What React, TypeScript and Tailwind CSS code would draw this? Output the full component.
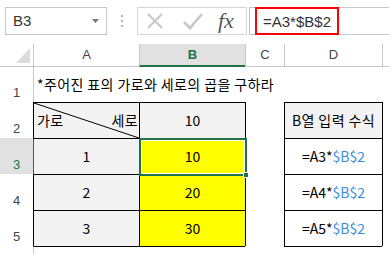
import type { ReactNode } from 'react';

const KR = "font-['Noto_Sans_CJK_KR',sans-serif] text-[14px] text-black";
const UI = "font-['Liberation_Sans',sans-serif]";

/** Row number on the left edge; Excel sits it near the bottom of the row. */
function RowHead({ n, active }: { n?: number; active?: boolean }) {
  return (
    <div
      className={`flex w-[33px] flex-none items-end justify-center pb-[3px] text-[13px] leading-none ${UI} ${
        active ? 'bg-[#e1e1e1] text-[#217346]' : 'text-[#444]'
      }`}
    >
      {n}
    </div>
  );
}

function Formula({ row }: { row: number }) {
  return (
    <span>
      =A{row}*<span className="text-[#3a8ee0]">$B$2</span>
    </span>
  );
}

interface DataRowProps {
  n: number;
  a: string;
  b: string;
  d: ReactNode;
  active?: boolean;
}

function DataRow({ n, a, b, d, active }: DataRowProps) {
  return (
    <div className={`flex h-[36px] ${KR}`}>
      <RowHead n={n} active={active} />
      <div
        className={`flex w-[106px] flex-none items-center justify-center border-l border-t border-t-black bg-[#f2f2f2] ${
          active ? 'border-l-[#217346]' : 'border-l-black'
        }`}
      >
        {a}
      </div>
      <div className="relative flex w-[106px] flex-none items-center justify-center border-l border-t border-black bg-[#ffff00]">
        {b}
        {active ? (
          <div className="absolute -left-[1px] -top-[1px] z-10 h-[38px] w-[108px] border-2 border-[#217346]">
            <div className="h-full w-full border border-white" />
            <div className="absolute -bottom-[4px] -right-[4px] h-[6px] w-[6px] border border-white bg-[#217346]" />
          </div>
        ) : null}
      </div>
      <div className="w-[39px] flex-none border-l border-black" />
      <div className="flex w-[98px] flex-none items-center justify-center border-l border-t border-black">
        {d}
      </div>
      <div className="flex-1 border-l border-black" />
    </div>
  );
}

export default function App() {
  return (
    <div className="h-[254px] w-[389px] overflow-hidden bg-white">
      {/* name box + formula bar */}
      <div className="flex h-[44px] items-start pt-[7px]">
        <div className={`ml-[5px] flex h-[28px] w-[102px] flex-none items-center justify-between border border-[#c6c6c6] pl-[7px] pr-[7px] text-[15px] text-[#333] ${UI}`}>
          <span>B3</span>
          <svg width="7" height="4" viewBox="0 0 7 4">
            <path d="M0 0h7L3.5 4z" fill="#777" />
          </svg>
        </div>
        <div className="flex h-[28px] w-[30px] flex-none flex-col items-center justify-center gap-[3px]">
          <span className="h-[2px] w-[2px] bg-[#b4b4b4]" />
          <span className="h-[2px] w-[2px] bg-[#b4b4b4]" />
          <span className="h-[2px] w-[2px] bg-[#b4b4b4]" />
        </div>
        <div className="flex h-[28px] w-[110px] flex-none items-center border border-[#d4d4d4] pl-[7px]">
          <svg width="20" height="16" viewBox="0 0 20 16" className="flex-none">
            <path d="M3 1l14 14M17 1L3 15" stroke="#c8c8c8" strokeWidth="2" fill="none" />
          </svg>
          <svg width="20" height="17" viewBox="0 0 20 17" className="ml-[18px] flex-none">
            <path d="M1 9l6 6L19 1" stroke="#c8c8c8" strokeWidth="2.6" fill="none" />
          </svg>
          <span className="ml-[15px] font-['Liberation_Serif',serif] text-[22px] italic leading-none text-[#555]">
            fx
          </span>
        </div>
        <div className="ml-[2px] flex h-[28px] flex-1 items-stretch border border-r-0 border-[#c6c6c6]">
          <span className={`-my-[1px] ml-[5px] flex items-center border-2 border-[#ff0000] pl-[6px] pr-[6px] pt-[2px] text-[15px] text-[#333] ${UI}`}>
            =A3*$B$2
          </span>
        </div>
      </div>

      {/* column headers */}
      <div className={`flex h-[23px] text-[13px] text-[#444] ${UI}`}>
        <div className="relative w-[33px] flex-none border-b border-[#c6c6c6]">
          <svg width="33" height="22" viewBox="0 0 33 22" className="absolute left-0 top-0">
            <path d="M16 19L30 4v15z" fill="#dcdcdc" />
          </svg>
        </div>
        <div className="flex w-[106px] flex-none items-center justify-center border-b border-l border-[#c6c6c6]">A</div>
        <div className="flex w-[106px] flex-none items-center justify-center border-b-2 border-l border-[#c6c6c6] border-b-[#217346] bg-[#e1e1e1] font-bold text-[#217346]">
          B
        </div>
        <div className="flex w-[39px] flex-none items-center justify-center border-b border-l border-[#c6c6c6]">C</div>
        <div className="flex w-[98px] flex-none items-center justify-center border-b border-l border-[#c6c6c6]">D</div>
        <div className="flex-1 border-b border-l border-[#c6c6c6]" />
      </div>

      {/* row 1 */}
      <div className={`flex h-[35px] ${KR}`}>
        <RowHead n={1} />
        <div className="flex flex-1 items-center border-l border-[#c6c6c6] pl-[3px] tracking-[0.4px]">
          *주어진 표의 가로와 세로의 곱을 구하라
        </div>
      </div>

      {/* row 2 */}
      <div className={`flex h-[36px] ${KR}`}>
        <RowHead n={2} />
        <div className="relative flex w-[106px] flex-none items-center justify-between border-l border-t border-black bg-[#f2f2f2] pl-[3px] pr-[1px] tracking-[0.4px]">
          <svg className="absolute inset-0 h-full w-full" viewBox="0 0 100 100" preserveAspectRatio="none">
            <line x1="0" y1="0" x2="100" y2="100" stroke="#000" strokeWidth="1" vectorEffect="non-scaling-stroke" />
          </svg>
          <span>가로</span>
          <span>세로</span>
        </div>
        <div className="flex w-[106px] flex-none items-center justify-center border-l border-t border-black bg-[#f2f2f2]">10</div>
        <div className="w-[39px] flex-none border-l border-black" />
        <div className="flex w-[98px] flex-none items-center justify-center border-l border-t border-black bg-[#f2f2f2] tracking-[0.4px]">
          B열 입력 수식
        </div>
        <div className="flex-1 border-l border-black" />
      </div>

      <DataRow n={3} a="1" b="10" d={<Formula row={3} />} active />
      <DataRow n={4} a="2" b="20" d={<Formula row={4} />} />
      <DataRow n={5} a="3" b="30" d={<Formula row={5} />} />

      {/* row 6, cut off */}
      <div className="flex h-[20px]">
        <RowHead />
        <div className="w-[106px] flex-none border-l border-t border-[#c6c6c6] border-t-black" />
        <div className="w-[106px] flex-none border-t border-black" />
        <div className="w-[39px] flex-none" />
        <div className="w-[98px] flex-none border-t border-black" />
      </div>
    </div>
  );
}
